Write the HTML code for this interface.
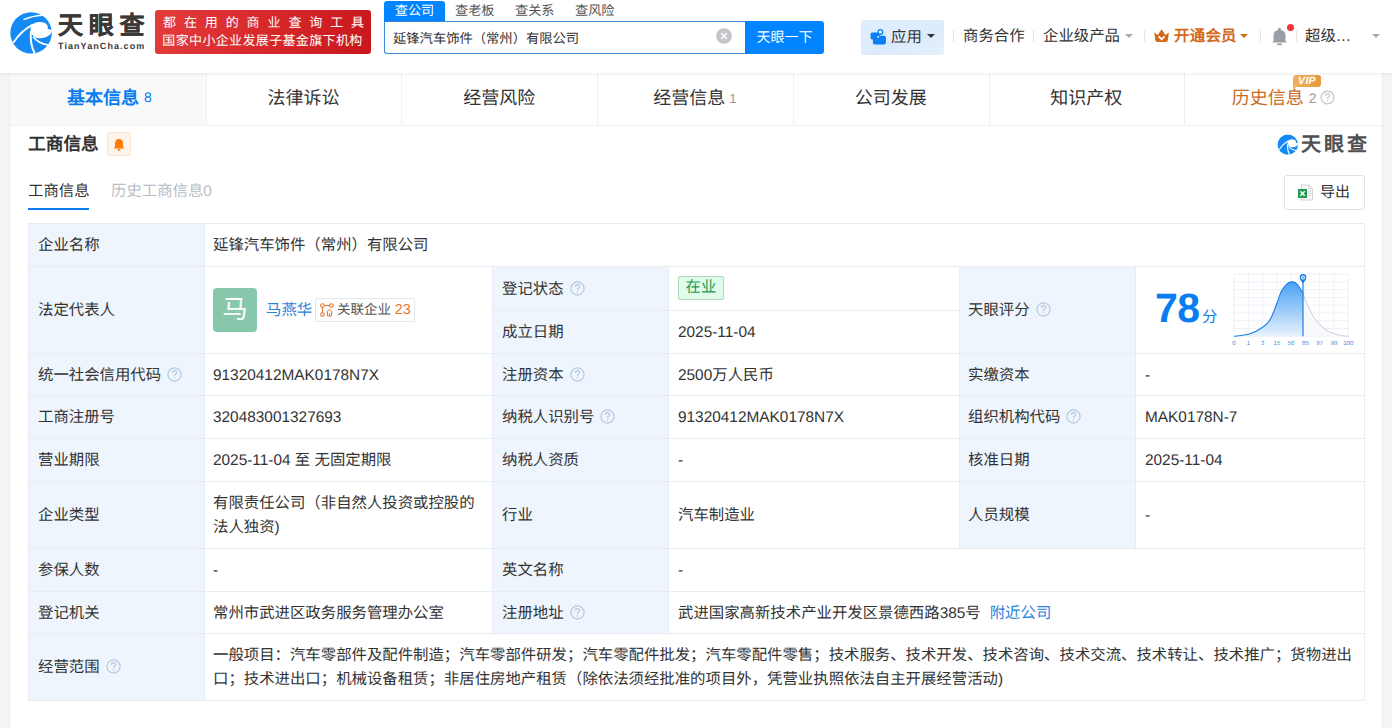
<!DOCTYPE html>
<html lang="zh-CN"><head><meta charset="utf-8">
<style>
*{box-sizing:border-box;margin:0;padding:0}
html,body{width:1392px;height:728px;overflow:hidden}
body{background:#f5f5f5;font-family:"Liberation Sans",sans-serif;color:#333;position:relative;text-rendering:geometricPrecision}
.a{position:absolute;white-space:nowrap}
#hdr{position:absolute;left:0;top:0;width:1392px;height:73px;background:#fff;box-shadow:0 1px 4px rgba(0,0,0,.08);z-index:2}
#card{position:absolute;left:10px;top:73px;width:1372px;height:680px;background:#fff;box-shadow:0 0 1.5px rgba(0,0,0,.12)}
.tab{position:absolute;top:0;height:53px;width:195.7px;border-bottom:1px solid #eef0f3;font-size:18px;line-height:51px;text-align:center;color:#333}
table{position:absolute;left:18px;top:150px;border-collapse:collapse;font-size:15px;color:#333}
td{border:1px solid #e4ebf3;padding:0 9px;vertical-align:middle;line-height:24px}
td.l{background:#eef5fc}
.t{font-size:15.4px;line-height:24px;color:#333;margin-top:1px}
.q{display:inline-block;vertical-align:middle;margin-left:6px;position:relative;top:-1px}
</style></head>
<body>
<div id="hdr">
<svg class="a" style="left:9px;top:11px" width="44" height="44" viewBox="0 0 728 728">
<circle cx="365" cy="362" r="343" fill="#1589f5"/>
<path d="M355,250 Q450,150 590,195 Q655,235 640,295 L720,320 Q690,425 560,448 Q470,458 412,425 Q355,380 355,250Z" fill="#fff"/>
<path d="M70,525 Q200,330 392,226" stroke="#fff" stroke-width="30" fill="none"/>
<path d="M362,330 Q345,560 425,700" stroke="#fff" stroke-width="32" fill="none"/>
<path d="M400,425 Q480,535 650,562" stroke="#fff" stroke-width="28" fill="none"/>
<path d="M240,142 Q380,80 560,70" stroke="#fff" stroke-width="24" fill="none"/>
</svg>
<div class="a" id="lgt" style="left:58px;top:7px;font-size:25px;font-weight:bold;color:#3b3838;letter-spacing:5.8px;line-height:38px;-webkit-text-stroke:0.3px #3b3838">天眼查</div>
<div class="a" id="lgs" style="left:58px;top:41px;font-size:9px;font-weight:bold;color:#3b3838;letter-spacing:1.07px;line-height:11px">TianYanCha.com</div>
<div class="a" style="left:155px;top:10px;width:216px;height:44px;border-radius:3px;background:linear-gradient(100deg,#e43b3b,#c9171c);color:#fff;font-size:13px;line-height:19px;padding-top:3px;text-align:center">
<div style="letter-spacing:7.9px;margin-left:8px;line-height:19px">都在用的商业查询工具</div>
<div style="letter-spacing:0.35px;margin-top:-1px;margin-left:-1px">国家中小企业发展子基金旗下机构</div>
</div>
<div class="a" style="left:384px;top:1px;width:61px;height:21px;background:#0084ff;border-radius:3px 3px 0 0;color:#fff;font-size:13.2px;line-height:19px;text-align:center">查公司</div>
<div class="a" style="left:455px;top:1px;font-size:13.2px;line-height:19px;color:#555">查老板</div>
<div class="a" style="left:515px;top:1px;font-size:13.2px;line-height:19px;color:#555">查关系</div>
<div class="a" style="left:575px;top:1px;font-size:13.2px;line-height:19px;color:#555">查风险</div>
<div class="a" style="left:384px;top:21px;width:362px;height:33px;border:1px solid #3a87d9;border-right:none;border-radius:0 0 0 3px;background:#fff"></div>
<div class="a" style="left:393px;top:28px;font-size:13.3px;line-height:22px;color:#333">延锋汽车饰件（常州）有限公司</div>
<svg class="a" style="left:716px;top:28px" width="16" height="16" viewBox="0 0 16 16"><circle cx="8" cy="8" r="7.8" fill="#c4c5ca"/><path d="M5.2,5.2 L10.8,10.8 M10.8,5.2 L5.2,10.8" stroke="#fff" stroke-width="1.6"/></svg>
<div class="a" style="left:745px;top:21px;width:79px;height:33px;background:#0084ff;border-radius:0 3px 3px 0;color:#fff;font-size:14px;line-height:33px;text-align:center">天眼一下</div>
<div class="a" style="left:861px;top:20px;width:83px;height:35px;background:linear-gradient(160deg,#e0eefd,#dcebfc 60%,#e6f0fc);border-radius:3px"></div>
<svg class="a" style="left:870px;top:28px" width="17" height="18" viewBox="0 0 17 18"><rect x="0.6" y="4.5" width="9" height="7" rx="1.6" fill="#0a7ff5"/><rect x="2.9" y="7.8" width="13" height="8.7" rx="1.8" fill="#0a7ff5"/><circle cx="10.4" cy="3.9" r="3" fill="#0a7ff5"/><circle cx="10.4" cy="3.9" r="1.7" fill="#e6f0fc"/><circle cx="8.1" cy="9.1" r="1" fill="#cfe4fb"/></svg>
<div class="a" style="left:891px;top:27px;font-size:15.4px;line-height:22px;color:#333">应用</div>
<div class="a" style="left:927px;top:34px;width:0;height:0;border-left:4px solid transparent;border-right:4px solid transparent;border-top:4px solid #333"></div>
<div class="a" style="left:953px;top:30px;width:1px;height:12px;background:#e5e5e5"></div>
<div class="a" style="left:963px;top:26px;font-size:15.4px;line-height:22px;color:#333">商务合作</div>
<div class="a" style="left:1033px;top:30px;width:1px;height:12px;background:#e5e5e5"></div>
<div class="a" style="left:1043px;top:26px;font-size:15.4px;line-height:22px;color:#333">企业级产品</div>
<div class="a" style="left:1125px;top:34px;width:0;height:0;border-left:4px solid transparent;border-right:4px solid transparent;border-top:4px solid #aaa"></div>
<div class="a" style="left:1144px;top:30px;width:1px;height:12px;background:#e5e5e5"></div>
<svg class="a" style="left:1153px;top:29px" width="17" height="14" viewBox="0 0 17 14"><path d="M1.3,3.6 L4.8,5.9 L8.6,0.3 L12.4,5.9 L15.9,3.6 L14.9,11 Q14.6,12.9 12.8,12.9 L4.4,12.9 Q2.6,12.9 2.3,11 Z" fill="#d5691b"/><path d="M5.6,7.3 L8.6,10.2 L11.6,7.3" stroke="#fff" stroke-width="1.7" fill="none"/></svg>
<div class="a" style="left:1174px;top:26px;font-size:15.4px;line-height:22px;color:#d3691b;font-weight:bold;letter-spacing:0.3px">开通会员</div>
<div class="a" style="left:1240px;top:34px;width:0;height:0;border-left:4px solid transparent;border-right:4px solid transparent;border-top:4px solid #d3691b"></div>
<div class="a" style="left:1260px;top:30px;width:1px;height:12px;background:#e5e5e5"></div>
<svg class="a" style="left:1271px;top:27px" width="17" height="19" viewBox="0 0 17 19"><circle cx="8.5" cy="2.2" r="1.4" fill="#9a9ea5"/><path d="M2.5,14 L2.5,8.5 Q2.5,3 8.5,3 Q14.5,3 14.5,8.5 L14.5,14 L16,15.5 L1,15.5Z" fill="#9a9ea5"/><rect x="6" y="16.5" width="5" height="1.6" fill="#9a9ea5"/></svg>
<div class="a" style="left:1287px;top:24px;width:7px;height:7px;border-radius:50%;background:#f0353b"></div>
<div class="a" style="left:1296px;top:30px;width:1px;height:12px;background:#e5e5e5"></div>
<div class="a" style="left:1305px;top:26px;font-size:15.4px;line-height:22px;color:#333">超级…</div>
<div class="a" style="left:1372px;top:34px;width:0;height:0;border-left:4px solid transparent;border-right:4px solid transparent;border-top:4px solid #aaa"></div>
</div>
<div id="card">
<div class="tab" style="left:0.0px;background:#f9f9f9;color:#0a7df0;font-weight:bold;padding-left:3px">基本信息<span style="font-weight:normal;font-size:14px;margin-left:5px;position:relative;top:-2px">8</span></div>
<div class="tab" style="left:195.7px">法律诉讼</div>
<div class="tab" style="left:391.4px">经营风险</div>
<div class="tab" style="left:587.1px">经营信息<span style="font-size:13px;color:#999;margin-left:4px;position:relative;top:-1px">1</span></div>
<div class="tab" style="left:782.8px">公司发展</div>
<div class="tab" style="left:978.5px">知识产权</div>
<div class="tab" style="left:1174.2px;width:198px;color:#c96a22">历史信息<span style="font-size:14px;color:#999;margin-left:5px;position:relative;top:-1px">2</span><svg class="q" style="margin-left:3px;top:-2px" width="15" height="15" viewBox="0 0 15 15"><circle cx="7.5" cy="7.5" r="6.4" fill="none" stroke="#c6c6c6" stroke-width="1.2"/><path d="M5.4,5.8 Q5.4,3.7 7.5,3.7 Q9.6,3.7 9.6,5.6 Q9.6,6.7 8.4,7.3 Q7.5,7.8 7.5,8.9" fill="none" stroke="#c6c6c6" stroke-width="1.2"/><circle cx="7.5" cy="10.9" r=".75" fill="#c6c6c6"/></svg></div>
<div class="a" style="left:196px;top:0;width:1px;height:53px;background:#eef0f3"></div><div class="a" style="left:391px;top:0;width:1px;height:53px;background:#eef0f3"></div><div class="a" style="left:587px;top:0;width:1px;height:53px;background:#eef0f3"></div><div class="a" style="left:783px;top:0;width:1px;height:53px;background:#eef0f3"></div><div class="a" style="left:979px;top:0;width:1px;height:53px;background:#eef0f3"></div><div class="a" style="left:1174px;top:0;width:1px;height:53px;background:#eef0f3"></div><div class="a" style="left:1283px;top:2px;width:28px;height:12px;background:linear-gradient(90deg,#f0b262,#e59a3c);border-radius:3px 3px 3px 0;color:#fff;font-size:10.5px;font-weight:bold;font-style:italic;line-height:12px;text-align:center;letter-spacing:0.3px">VIP</div><div class="a" style="left:1283px;top:13px;width:0;height:0;border-top:4px solid #f0b262;border-right:4px solid transparent"></div>
<div class="a" style="left:18px;top:58px;font-size:17.7px;font-weight:bold;line-height:26px;color:#333">工商信息</div>
<div class="a" style="left:97px;top:59px;width:24px;height:24px;background:#fff4ea;border:1px solid #fce3cf;border-radius:2px"></div>
<svg class="a" style="left:103px;top:65px" width="12" height="13" viewBox="0 0 12 13"><path d="M6,1 Q10,1 10,6 L10,9 L11.5,10.5 L0.5,10.5 L2,9 L2,6 Q2,1 6,1Z" fill="#ff7a00"/><rect x="4.5" y="11" width="3" height="1.5" rx=".7" fill="#ff7a00"/></svg>
<svg class="a" style="left:1266.5px;top:60.5px" width="21.5" height="21.5" viewBox="0 0 728 728">
<circle cx="365" cy="362" r="343" fill="#1589f5"/>
<path d="M355,250 Q450,150 590,195 Q655,235 640,295 L720,320 Q690,425 560,448 Q470,458 412,425 Q355,380 355,250Z" fill="#fff"/>
<path d="M70,525 Q200,330 392,226" stroke="#fff" stroke-width="40" fill="none"/>
<path d="M362,330 Q345,560 425,700" stroke="#fff" stroke-width="40" fill="none"/>
<path d="M400,425 Q480,535 650,562" stroke="#fff" stroke-width="36" fill="none"/>
</svg>
<div class="a" style="left:1291px;top:57px;font-size:20px;font-weight:bold;color:#505050;letter-spacing:3px;line-height:30px">天眼查</div>
<div class="a" style="left:18px;top:108px;font-size:15.4px;line-height:22px;color:#333">工商信息</div>
<div class="a" style="left:18px;top:135px;width:61px;height:2px;background:#0a7df0"></div>
<div class="a" style="left:101px;top:108px;font-size:15.4px;line-height:22px;color:#b9bdc5">历史工商信息0</div>
<div class="a" style="left:1274px;top:102px;width:81px;height:35px;border:1px solid #dfe3e9;border-radius:3px"></div>
<svg class="a" style="left:1287px;top:111px" width="18" height="17" viewBox="0 0 18 17"><path d="M4.5,1 L12,1 L15.5,4.5 L15.5,16 L4.5,16Z" fill="#fafafa" stroke="#cfcfcf" stroke-width=".9"/><path d="M12,1 L12,4.5 L15.5,4.5" fill="none" stroke="#cfcfcf" stroke-width=".9"/><rect x="1" y="5" width="9" height="9" fill="#1e9d52"/><path d="M3.3,7.3 L7.7,11.7 M7.7,7.3 L3.3,11.7" stroke="#fff" stroke-width="1.4"/><path d="M11,7.5 H14 M11,9.5 H14 M11,11.5 H14" stroke="#cfcfcf" stroke-width=".8"/></svg>
<div class="a" style="left:1310px;top:109px;font-size:15px;line-height:22px;color:#333">导出</div>
</div>
<div id="tbl">
<div class="a" style="left:28px;top:223px;width:176px;height:477px;background:#eef5fd"></div>
<div class="a" style="left:492px;top:266px;width:176px;height:367px;background:#eef5fd"></div>
<div class="a" style="left:959px;top:266px;width:176px;height:282px;background:#eef5fd"></div>
<div class="a" style="left:28px;top:223px;width:1337px;height:1px;background:#e6ecf2"></div>
<div class="a" style="left:28px;top:266px;width:1337px;height:1px;background:#e6ecf2"></div>
<div class="a" style="left:28px;top:353px;width:1337px;height:1px;background:#e6ecf2"></div>
<div class="a" style="left:28px;top:395px;width:1337px;height:1px;background:#e6ecf2"></div>
<div class="a" style="left:28px;top:438px;width:1337px;height:1px;background:#e6ecf2"></div>
<div class="a" style="left:28px;top:481px;width:1337px;height:1px;background:#e6ecf2"></div>
<div class="a" style="left:28px;top:548px;width:1337px;height:1px;background:#e6ecf2"></div>
<div class="a" style="left:28px;top:591px;width:1337px;height:1px;background:#e6ecf2"></div>
<div class="a" style="left:28px;top:633px;width:1337px;height:1px;background:#e6ecf2"></div>
<div class="a" style="left:28px;top:700px;width:1337px;height:1px;background:#e6ecf2"></div>
<div class="a" style="left:492px;top:310px;width:467px;height:1px;background:#e6ecf2"></div>
<div class="a" style="left:28px;top:223px;width:1px;height:478px;background:#e6ecf2"></div>
<div class="a" style="left:204px;top:223px;width:1px;height:478px;background:#e6ecf2"></div>
<div class="a" style="left:492px;top:266px;width:1px;height:368px;background:#e6ecf2"></div>
<div class="a" style="left:668px;top:266px;width:1px;height:368px;background:#e6ecf2"></div>
<div class="a" style="left:959px;top:266px;width:1px;height:283px;background:#e6ecf2"></div>
<div class="a" style="left:1135px;top:266px;width:1px;height:283px;background:#e6ecf2"></div>
<div class="a" style="left:1364px;top:223px;width:1px;height:478px;background:#e6ecf2"></div>
<div class="a t" style="left:38px;top:233.0px;">企业名称</div>
<div class="a t" style="left:38px;top:298.0px;">法定代表人</div>
<div class="a t" style="left:38px;top:362.5px;">统一社会信用代码<svg class="q" width="15" height="15" viewBox="0 0 15 15"><circle cx="7.5" cy="7.5" r="6.6" fill="none" stroke="#b4c9de" stroke-width="1.2"/><path d="M5.4,5.8 Q5.4,3.7 7.5,3.7 Q9.6,3.7 9.6,5.6 Q9.6,6.7 8.4,7.3 Q7.5,7.8 7.5,8.9" fill="none" stroke="#b4c9de" stroke-width="1.2"/><circle cx="7.5" cy="10.9" r=".75" fill="#b4c9de"/></svg></div>
<div class="a t" style="left:38px;top:405.0px;">工商注册号</div>
<div class="a t" style="left:38px;top:448.0px;">营业期限</div>
<div class="a t" style="left:38px;top:503.0px;">企业类型</div>
<div class="a t" style="left:38px;top:558.0px;">参保人数</div>
<div class="a t" style="left:38px;top:600.5px;">登记机关</div>
<div class="a t" style="left:38px;top:655.0px;">经营范围<svg class="q" width="15" height="15" viewBox="0 0 15 15"><circle cx="7.5" cy="7.5" r="6.6" fill="none" stroke="#b4c9de" stroke-width="1.2"/><path d="M5.4,5.8 Q5.4,3.7 7.5,3.7 Q9.6,3.7 9.6,5.6 Q9.6,6.7 8.4,7.3 Q7.5,7.8 7.5,8.9" fill="none" stroke="#b4c9de" stroke-width="1.2"/><circle cx="7.5" cy="10.9" r=".75" fill="#b4c9de"/></svg></div>
<div class="a t" style="left:213px;top:233.0px;">延锋汽车饰件（常州）有限公司</div>
<div class="a t" style="left:213px;top:362.5px;">91320412MAK0178N7X</div>
<div class="a t" style="left:213px;top:405.0px;">320483001327693</div>
<div class="a t" style="left:213px;top:448.0px;">2025-11-04 至 无固定期限</div>
<div class="a t" style="left:213px;top:491.0px;line-height:24px">有限责任公司（非自然人投资或控股的<br>法人独资)</div>
<div class="a t" style="left:213px;top:558.0px;">-</div>
<div class="a t" style="left:213px;top:600.5px;">常州市武进区政务服务管理办公室</div>
<div class="a t" style="left:213px;top:643.0px;line-height:24px">一般项目：汽车零部件及配件制造；汽车零部件研发；汽车零配件批发；汽车零配件零售；技术服务、技术开发、技术咨询、技术交流、技术转让、技术推广；货物进出<br>口；技术进出口；机械设备租赁；非居住房地产租赁（除依法须经批准的项目外，凭营业执照依法自主开展经营活动)</div>
<div class="a t" style="left:502px;top:276.5px;">登记状态<svg class="q" width="15" height="15" viewBox="0 0 15 15"><circle cx="7.5" cy="7.5" r="6.6" fill="none" stroke="#b4c9de" stroke-width="1.2"/><path d="M5.4,5.8 Q5.4,3.7 7.5,3.7 Q9.6,3.7 9.6,5.6 Q9.6,6.7 8.4,7.3 Q7.5,7.8 7.5,8.9" fill="none" stroke="#b4c9de" stroke-width="1.2"/><circle cx="7.5" cy="10.9" r=".75" fill="#b4c9de"/></svg></div>
<div class="a t" style="left:502px;top:320px;">成立日期</div>
<div class="a t" style="left:502px;top:362.5px;">注册资本<svg class="q" width="15" height="15" viewBox="0 0 15 15"><circle cx="7.5" cy="7.5" r="6.6" fill="none" stroke="#b4c9de" stroke-width="1.2"/><path d="M5.4,5.8 Q5.4,3.7 7.5,3.7 Q9.6,3.7 9.6,5.6 Q9.6,6.7 8.4,7.3 Q7.5,7.8 7.5,8.9" fill="none" stroke="#b4c9de" stroke-width="1.2"/><circle cx="7.5" cy="10.9" r=".75" fill="#b4c9de"/></svg></div>
<div class="a t" style="left:502px;top:405.0px;">纳税人识别号<svg class="q" width="15" height="15" viewBox="0 0 15 15"><circle cx="7.5" cy="7.5" r="6.6" fill="none" stroke="#b4c9de" stroke-width="1.2"/><path d="M5.4,5.8 Q5.4,3.7 7.5,3.7 Q9.6,3.7 9.6,5.6 Q9.6,6.7 8.4,7.3 Q7.5,7.8 7.5,8.9" fill="none" stroke="#b4c9de" stroke-width="1.2"/><circle cx="7.5" cy="10.9" r=".75" fill="#b4c9de"/></svg></div>
<div class="a t" style="left:502px;top:448.0px;">纳税人资质</div>
<div class="a t" style="left:502px;top:503.0px;">行业</div>
<div class="a t" style="left:502px;top:558.0px;">英文名称</div>
<div class="a t" style="left:502px;top:600.5px;">注册地址<svg class="q" width="15" height="15" viewBox="0 0 15 15"><circle cx="7.5" cy="7.5" r="6.6" fill="none" stroke="#b4c9de" stroke-width="1.2"/><path d="M5.4,5.8 Q5.4,3.7 7.5,3.7 Q9.6,3.7 9.6,5.6 Q9.6,6.7 8.4,7.3 Q7.5,7.8 7.5,8.9" fill="none" stroke="#b4c9de" stroke-width="1.2"/><circle cx="7.5" cy="10.9" r=".75" fill="#b4c9de"/></svg></div>
<div class="a" style="left:678px;top:276px;width:46px;height:24px;background:#e1fbea;border:1px solid #a9d9b9;border-radius:2px;color:#1b9a52;font-size:15.4px;line-height:22px;text-align:center">在业</div>
<div class="a t" style="left:678px;top:320px;">2025-11-04</div>
<div class="a t" style="left:678px;top:362.5px;">2500万人民币</div>
<div class="a t" style="left:678px;top:405.0px;">91320412MAK0178N7X</div>
<div class="a t" style="left:678px;top:448.0px;">-</div>
<div class="a t" style="left:678px;top:503.0px;">汽车制造业</div>
<div class="a t" style="left:678px;top:558.0px;">-</div>
<div class="a t" style="left:678px;top:600.5px;">武进国家高新技术产业开发区景德西路385号<span style="color:#2b82dd;margin-left:9px">附近公司</span></div>
<div class="a t" style="left:968px;top:298.0px;">天眼评分<svg class="q" width="15" height="15" viewBox="0 0 15 15"><circle cx="7.5" cy="7.5" r="6.6" fill="none" stroke="#b4c9de" stroke-width="1.2"/><path d="M5.4,5.8 Q5.4,3.7 7.5,3.7 Q9.6,3.7 9.6,5.6 Q9.6,6.7 8.4,7.3 Q7.5,7.8 7.5,8.9" fill="none" stroke="#b4c9de" stroke-width="1.2"/><circle cx="7.5" cy="10.9" r=".75" fill="#b4c9de"/></svg></div>
<div class="a t" style="left:968px;top:362.5px;">实缴资本</div>
<div class="a t" style="left:968px;top:405.0px;">组织机构代码<svg class="q" width="15" height="15" viewBox="0 0 15 15"><circle cx="7.5" cy="7.5" r="6.6" fill="none" stroke="#b4c9de" stroke-width="1.2"/><path d="M5.4,5.8 Q5.4,3.7 7.5,3.7 Q9.6,3.7 9.6,5.6 Q9.6,6.7 8.4,7.3 Q7.5,7.8 7.5,8.9" fill="none" stroke="#b4c9de" stroke-width="1.2"/><circle cx="7.5" cy="10.9" r=".75" fill="#b4c9de"/></svg></div>
<div class="a t" style="left:968px;top:448.0px;">核准日期</div>
<div class="a t" style="left:968px;top:503.0px;">人员规模</div>
<div class="a t" style="left:1145px;top:362.5px;">-</div>
<div class="a t" style="left:1145px;top:405.0px;">MAK0178N-7</div>
<div class="a t" style="left:1145px;top:448.0px;">2025-11-04</div>
<div class="a t" style="left:1145px;top:503.0px;">-</div>
<div class="a" style="left:213px;top:288px;width:44px;height:44px;background:#87c7ab;border-radius:4px;color:#fff;font-size:25.5px;line-height:44px;text-align:center">马</div>
<div class="a t" style="left:266px;top:298.0px;color:#2b82dd">马燕华</div>
<div class="a" style="left:315px;top:298px;width:100px;height:24px;border:1px solid #e3e6eb;border-radius:2px;font-size:13.5px;line-height:22px;color:#555;padding-left:21px">关联企业 <span style="color:#e4772b;font-size:14.3px">23</span></div>
<svg class="a" style="left:320px;top:303px" width="14" height="14" viewBox="0 0 14 14"><circle cx="2.5" cy="2.5" r="1.8" fill="none" stroke="#e4772b" stroke-width="1.1"/><circle cx="11.5" cy="2.5" r="1.8" fill="none" stroke="#e4772b" stroke-width="1.1"/><circle cx="2.5" cy="11.5" r="1.8" fill="none" stroke="#e4772b" stroke-width="1.1"/><path d="M4.3,2.5 H9.7 M2.5,4.3 V9.7" stroke="#e4772b" stroke-width="1.1"/><path d="M6.5,9 L9.5,6.5 L12.5,9 M7.5,9 V13 H11.5 V9 M9.5,10 V13" stroke="#e4772b" stroke-width="1" fill="none"/></svg>
<div class="a" style="left:1155px;top:284px;font-size:41px;font-weight:bold;color:#0a7df0;line-height:48px;letter-spacing:-0.5px">78</div><div class="a" style="left:1202px;top:306px;font-size:15.4px;color:#0a7df0;line-height:24px">分</div>
<svg class="a" id="chart" style="left:1230.4px;top:270.4px" width="130" height="80" viewBox="-4 -4 130 80">
<defs><linearGradient id="g1" x1="0" y1="0" x2="0" y2="1"><stop offset="0" stop-color="#4aa1f5"/><stop offset="1" stop-color="#e8f2fd"/></linearGradient></defs>
<line x1="0.0" y1="0" x2="0.0" y2="62.3" stroke="#edf2f8" stroke-width="1"/><line x1="0" y1="0.0" x2="114.3" y2="0.0" stroke="#edf2f8" stroke-width="1"/><line x1="14.3" y1="0" x2="14.3" y2="62.3" stroke="#edf2f8" stroke-width="1"/><line x1="0" y1="7.8" x2="114.3" y2="7.8" stroke="#edf2f8" stroke-width="1"/><line x1="28.6" y1="0" x2="28.6" y2="62.3" stroke="#edf2f8" stroke-width="1"/><line x1="0" y1="15.6" x2="114.3" y2="15.6" stroke="#edf2f8" stroke-width="1"/><line x1="42.9" y1="0" x2="42.9" y2="62.3" stroke="#edf2f8" stroke-width="1"/><line x1="0" y1="23.4" x2="114.3" y2="23.4" stroke="#edf2f8" stroke-width="1"/><line x1="57.1" y1="0" x2="57.1" y2="62.3" stroke="#edf2f8" stroke-width="1"/><line x1="0" y1="31.1" x2="114.3" y2="31.1" stroke="#edf2f8" stroke-width="1"/><line x1="71.4" y1="0" x2="71.4" y2="62.3" stroke="#edf2f8" stroke-width="1"/><line x1="0" y1="38.9" x2="114.3" y2="38.9" stroke="#edf2f8" stroke-width="1"/><line x1="85.7" y1="0" x2="85.7" y2="62.3" stroke="#edf2f8" stroke-width="1"/><line x1="0" y1="46.7" x2="114.3" y2="46.7" stroke="#edf2f8" stroke-width="1"/><line x1="100.0" y1="0" x2="100.0" y2="62.3" stroke="#edf2f8" stroke-width="1"/><line x1="0" y1="54.5" x2="114.3" y2="54.5" stroke="#edf2f8" stroke-width="1"/><line x1="114.3" y1="0" x2="114.3" y2="62.3" stroke="#edf2f8" stroke-width="1"/><line x1="0" y1="62.3" x2="114.3" y2="62.3" stroke="#edf2f8" stroke-width="1"/>
<path d="M69.0,20.0 C70.10,22.47 70.92,25.13 72.60,28.80 C74.28,32.47 76.87,38.33 79.10,42.00 C81.33,45.67 83.43,48.23 86.00,50.80 C88.57,53.37 91.25,55.67 94.50,57.40 C97.75,59.13 102.20,60.38 105.50,61.20 C108.80,62.02 112.83,62.12 114.30,62.30 L114.3,62.3 L69.0,62.3Z" fill="#f8f9fb"/>
<path d="M0,62.3 C2.53,61.93 10.35,61.65 15.20,60.10 C20.05,58.55 25.58,55.47 29.10,53.00 C32.62,50.53 33.97,49.33 36.30,45.30 C38.63,41.27 41.27,33.47 43.10,28.80 C44.93,24.13 45.68,20.42 47.30,17.30 C48.92,14.18 51.15,11.67 52.80,10.10 C54.45,8.53 55.73,8.08 57.20,7.90 C58.67,7.72 60.13,7.99 61.60,9.00 C63.07,10.01 64.77,12.13 66.00,13.96 C67.23,15.79 67.90,17.53 69.00,20.00 L69.0,62.3 Z" fill="url(#g1)"/>
<path d="M0,62.3 C2.53,61.93 10.35,61.65 15.20,60.10 C20.05,58.55 25.58,55.47 29.10,53.00 C32.62,50.53 33.97,49.33 36.30,45.30 C38.63,41.27 41.27,33.47 43.10,28.80 C44.93,24.13 45.68,20.42 47.30,17.30 C48.92,14.18 51.15,11.67 52.80,10.10 C54.45,8.53 55.73,8.08 57.20,7.90 C58.67,7.72 60.13,7.99 61.60,9.00 C63.07,10.01 64.77,12.13 66.00,13.96 C67.23,15.79 67.90,17.53 69.00,20.00" fill="none" stroke="#1a7ee6" stroke-width="1.1"/>
<path d="M69.0,20.0 C70.10,22.47 70.92,25.13 72.60,28.80 C74.28,32.47 76.87,38.33 79.10,42.00 C81.33,45.67 83.43,48.23 86.00,50.80 C88.57,53.37 91.25,55.67 94.50,57.40 C97.75,59.13 102.20,60.38 105.50,61.20 C108.80,62.02 112.83,62.12 114.30,62.30" fill="none" stroke="#c9ced6" stroke-width="1"/>
<line x1="69.0" y1="8" x2="69.0" y2="62.3" stroke="#1a7ee6" stroke-width="1.2"/>
<path d="M65.6,3.5 A3.4,3.4 0 1 1 72.4,3.5 Q72.2,6 69.0,9.5 Q65.8,6 65.6,3.5Z" fill="#1a7ee6"/>
<circle cx="69.0" cy="3.5" r="1.9" fill="#fff"/>
<circle cx="69.0" cy="3.5" r="0.9" fill="#1a7ee6"/>
<g font-size="6" fill="#3b8de0" font-family="Liberation Sans"><text x="0.0" y="71" text-anchor="middle">0</text><text x="14.3" y="71" text-anchor="middle">1</text><text x="28.6" y="71" text-anchor="middle">3</text><text x="42.9" y="71" text-anchor="middle">15</text><text x="57.1" y="71" text-anchor="middle">50</text><text x="71.4" y="71" text-anchor="middle">85</text><text x="85.7" y="71" text-anchor="middle">97</text><text x="100.0" y="71" text-anchor="middle">99</text><text x="114.3" y="71" text-anchor="middle">100</text></g>
</svg>
</div>
</body></html>
